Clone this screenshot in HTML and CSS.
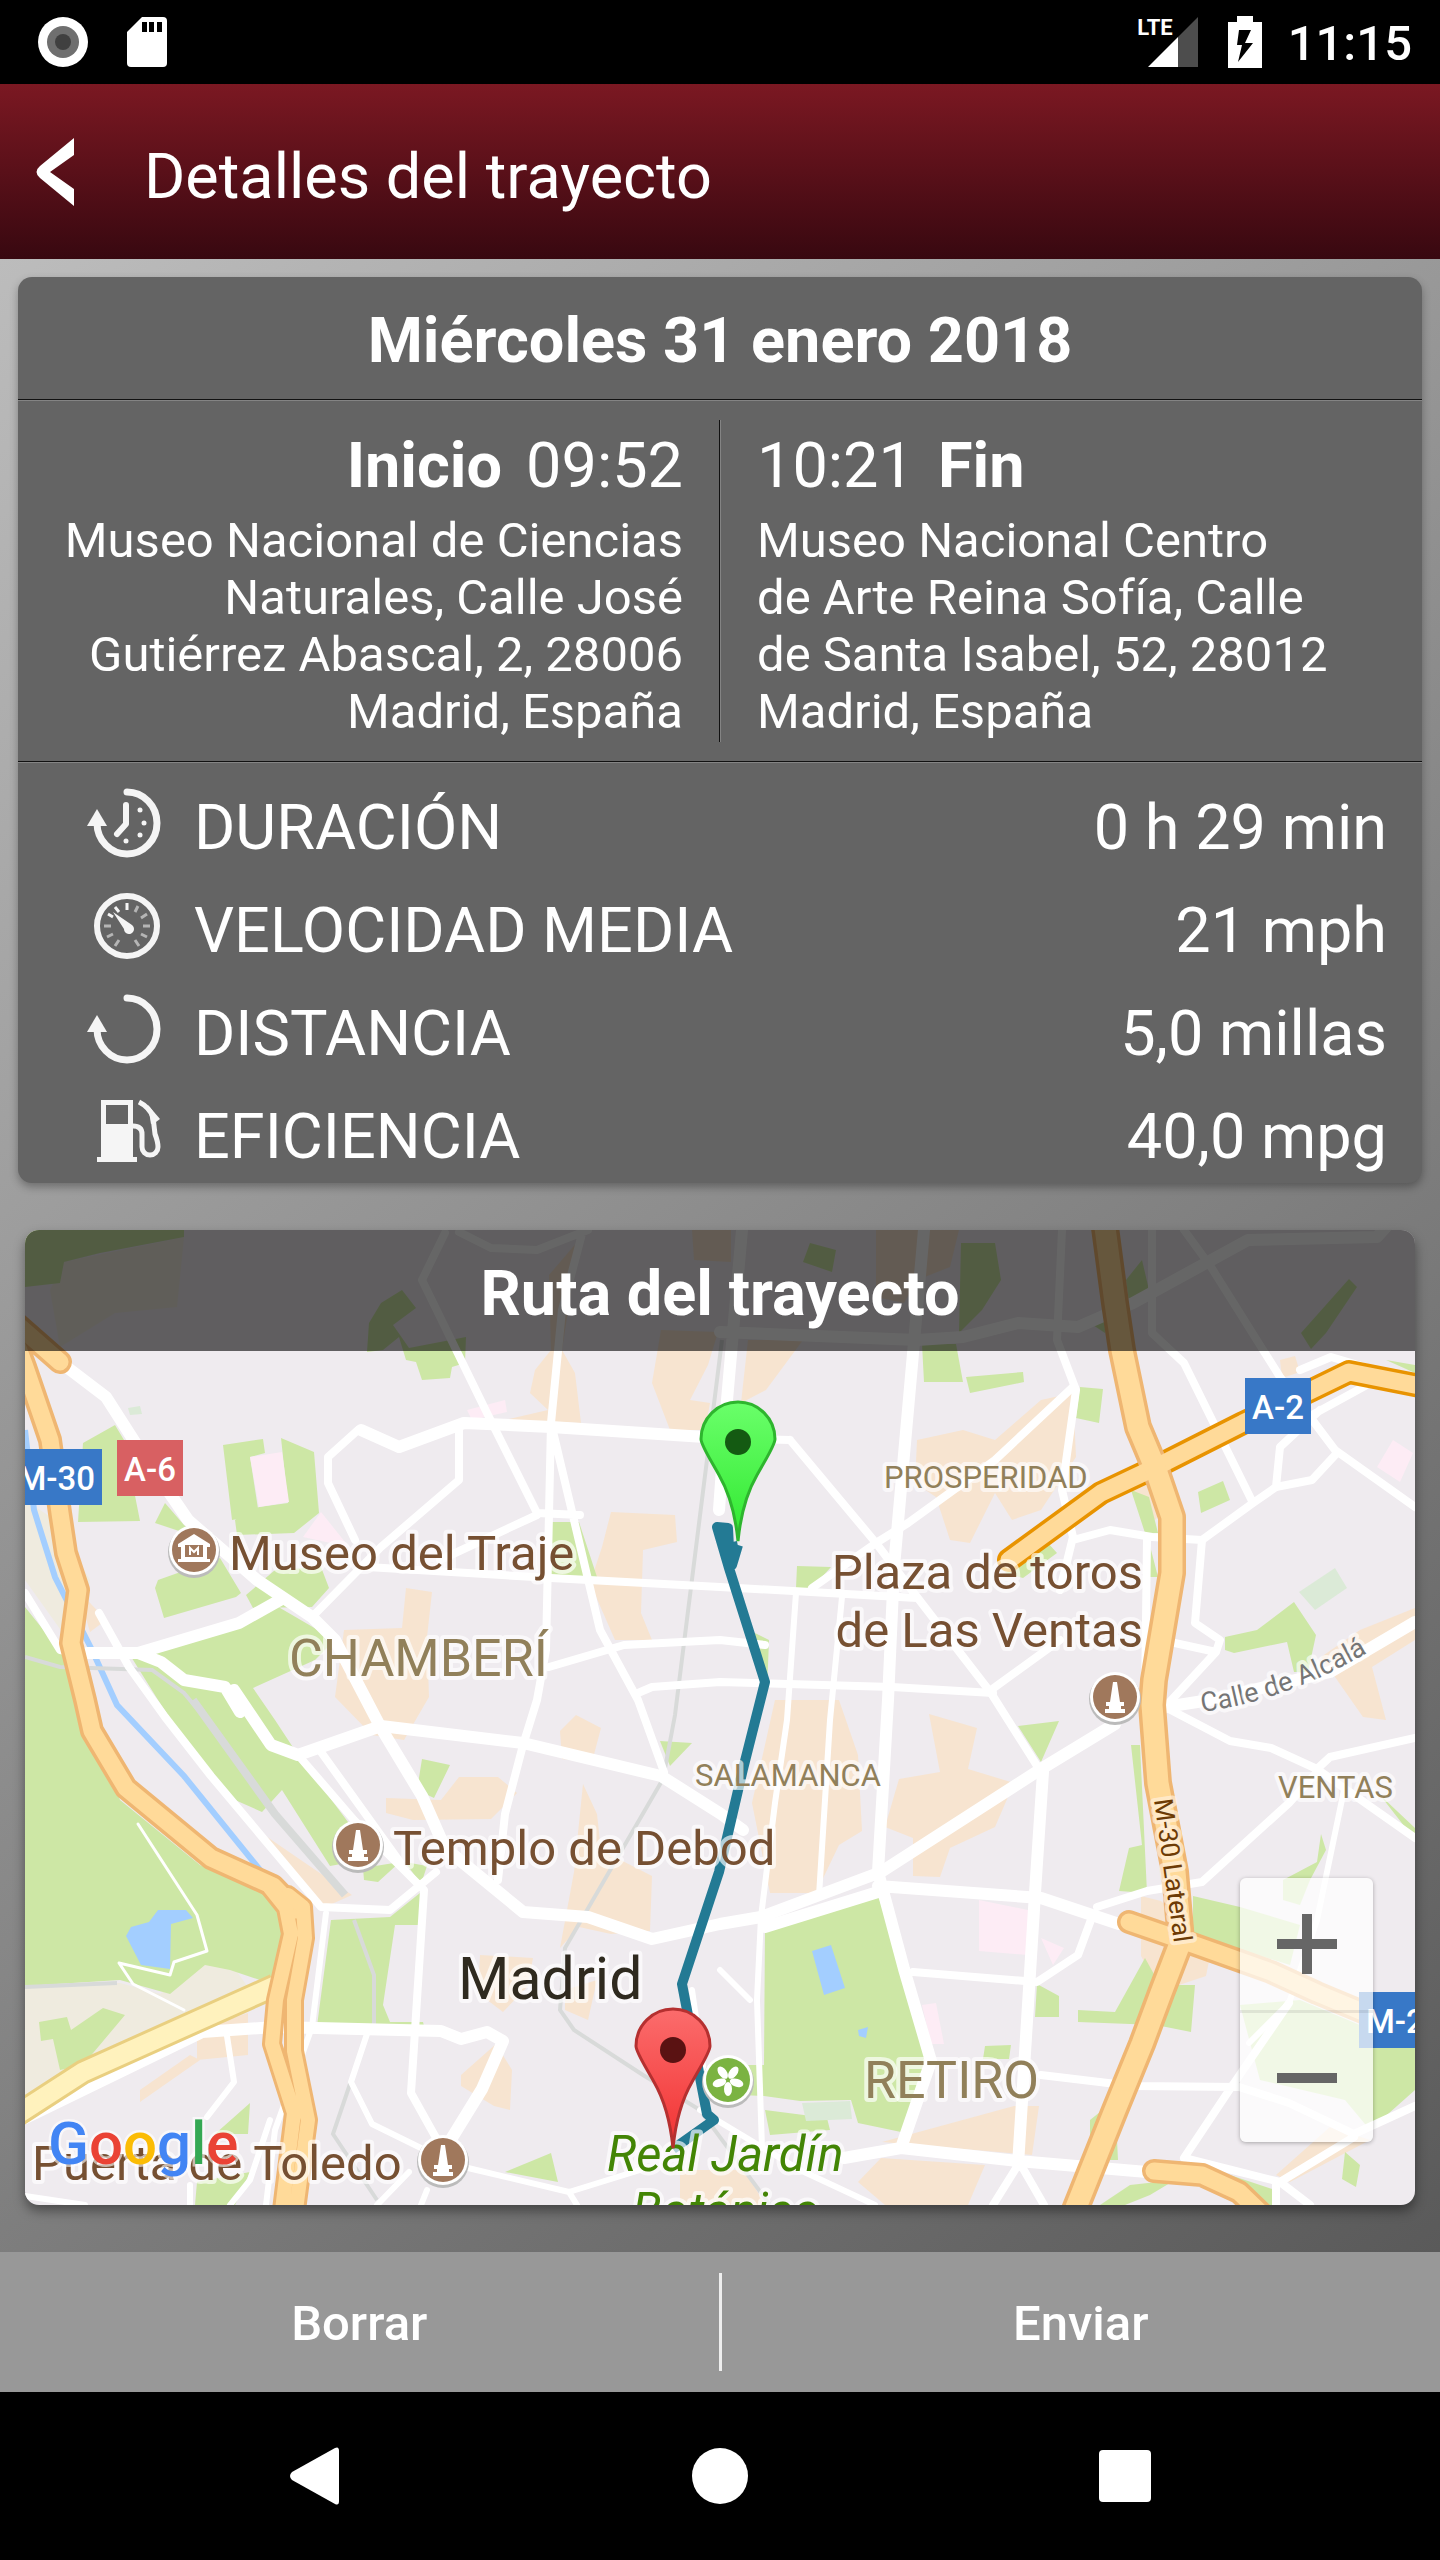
FILE: index.html
```html
<!DOCTYPE html>
<html lang="es">
<head>
    <meta charset="UTF-8">
    <meta name="viewport" content="width=device-width, initial-scale=1.0">
    <title>Detalles del trayecto</title>
    <link rel="stylesheet" href="styles.css">
</head>
<body>

<!-- Barra de estado -->
<div class="status-bar">
    <div class="status-left">
        <svg width="50" height="50" viewBox="0 0 50 50"><circle cx="25" cy="25" r="25" fill="#fff"/><circle cx="25" cy="25" r="16" fill="#6f6f6f"/><circle cx="25" cy="25" r="8" fill="#404040"/></svg>
        <svg width="40" height="50" viewBox="0 0 40 50"><path fill="#fff" d="M15 0h21a4 4 0 0 1 4 4v42a4 4 0 0 1-4 4H4a4 4 0 0 1-4-4V15z"/><path d="M15 5h5v10h-5zM22 5h5v10h-5zM30 5h5v10h-5z"/></svg>
    </div>
    <div class="status-right">
        <span class="lte">LTE</span>
        <svg class="signal" width="50" height="50" viewBox="0 0 50 50"><path fill="#4d4d4d" d="M50 0v50H30V20z"/><path fill="#fff" d="M30 20v30H0z"/></svg>
        <svg class="battery" width="34" height="52" viewBox="0 0 34 52"><path fill="#fff" d="M9 0h16v6h9v46H0V6h9z"/><path d="M11 14h12l-6 13h8L10 46l4-17H9z"/></svg>
        <span class="clock">11:15</span>
    </div>
</div>

<header class="app-header">
    <button class="back" aria-label="Volver">
        <svg width="40" height="70" viewBox="0 0 40 70"><path fill="#fff" d="M38 1v17L14 35l24 17v17L4 41q-7-6 0-12z"/></svg>
    </button>
    <h1>Detalles del trayecto</h1>
</header>

<main class="content">
    <section class="card">
        <h2 class="card-title">Miércoles 31 enero 2018</h2>
        <div class="places">
            <div class="place start">
                <p class="time"><strong>Inicio</strong><span>09:52</span></p>
                <p class="address">Museo Nacional de Ciencias Naturales, Calle José Gutiérrez Abascal, 2, 28006 Madrid, España</p>
            </div>
            <div class="place end">
                <p class="time"><span>10:21</span><strong>Fin</strong></p>
                <p class="address">Museo Nacional Centro de&nbsp;Arte Reina Sofía, Calle de&nbsp;Santa Isabel, 52, 28012 Madrid, España</p>
            </div>
        </div>
        <dl class="stats">
            <div class="stat">
                <dt>
                    <svg width="80" height="72" viewBox="0 0 80 72" fill="none" stroke="#f5f5f5"><path stroke-width="7" stroke-linecap="round" d="M43 5a30 31 0 1 1-30 31"/><path fill="#f5f5f5" stroke="none" d="M13 22l10 17H3z"/><path stroke-width="6" stroke-linecap="round" stroke-linejoin="round" d="M42 18v19l-9 10"/><g fill="#f5f5f5" stroke="none"><circle cx="56" cy="23" r="2.5"/><circle cx="60" cy="36" r="2.5"/><circle cx="56" cy="48" r="2.5"/><circle cx="42" cy="54" r="2.5"/></g></svg>
                    DURACIÓN
                </dt>
                <dd>0 h 29 min</dd>
            </div>
            <div class="stat">
                <dt>
                    <svg width="80" height="72" viewBox="0 0 80 72" fill="none" stroke="#f5f5f5"><circle cx="43" cy="36" r="30" stroke-width="6"/><g stroke="#b5b5b5" stroke-width="3"><path d="M20 36h7M59 36h7M23 47l6-3M57 44l6 3M31 56l4-6M51 50l4 6M57 28l6-4M51 22l3-6"/></g><path stroke-width="3" d="M43 13v7M31 17l4 5M24 24l5 3"/><path fill="#f5f5f5" stroke="none" d="M29 22l19 13a5 5 0 1 1-8 4z"/></svg>
                    VELOCIDAD MEDIA
                </dt>
                <dd>21 mph</dd>
            </div>
            <div class="stat">
                <dt>
                    <svg width="80" height="72" viewBox="0 0 80 72" fill="none" stroke="#f5f5f5"><path stroke-width="7" stroke-linecap="round" d="M43 5a30 31 0 1 1-30 31"/><path fill="#f5f5f5" stroke="none" d="M13 22l10 17H3z"/></svg>
                    DISTANCIA
                </dt>
                <dd>5,0 millas</dd>
            </div>
            <div class="stat">
                <dt>
                    <svg width="80" height="72" viewBox="0 0 80 72"><path fill="#f5f5f5" fill-rule="evenodd" d="M17 4h32v57h4v5H13v-5h4zM22 9v19h22V9z"/><path fill="none" stroke="#f5f5f5" stroke-width="5" d="M49 30q9 0 9 8v13a8 8 0 0 0 16 0q0-5-3-13l-2-17Q65 11 55 6"/><path fill="#f5f5f5" d="M64 9l12 14-4 3-5 2z"/></svg>
                    EFICIENCIA
                </dt>
                <dd>40,0 mpg</dd>
            </div>
        </dl>
    </section>

    <section class="map-card">
        <h2 class="map-title">Ruta del trayecto</h2>
        <svg class="map" viewBox="25 1230 1390 975" role="img" aria-label="Mapa de Madrid con la ruta">
            <defs>
                <linearGradient id="green-pin" x2="0" y2="1"><stop offset="0" stop-color="#6aff6a"/><stop offset="1" stop-color="#30e830"/></linearGradient>
                <linearGradient id="red-pin" x2="0" y2="1"><stop offset="0" stop-color="#fb6c6c"/><stop offset="1" stop-color="#f23232"/></linearGradient>
                <g id="monument"><circle cy="2" r="26" fill="#bbb"/><circle r="25" fill="#fff"/><circle r="22" fill="#a0785c"/><path fill="#fff" d="M-2-15h4l3 20h4v4h-3v3h4v4h-20v-4h4v-3h-3v-4h4z"/></g>
            </defs>

            <!-- Zonas edificadas -->
            <g fill="#f7e4d0">
                <path d="M692 1230h39v32l-37-2zM661 1330l57 2-10 33-18 35 20 3-5 27h-35l-18-47zM579 1240l-17 110 13 23 6 50-76-3 43-10-18-17 5-23 16-20-2-75z"/>
                <path d="M611 1512l64 3 2 27-34 8-2 63 11 27h-37l-25-57 12-36zM406 1588l26 4-5 45 2 60-25 43-32-5-37-38 9-67 58-2z"/>
                <path d="M459 1777h39l19 16-26 26-78 1-27-7v-15l55 2zM576 1715l25 13-9 34-30-3-2-28zM583 1784l14 30 4 36 51 26-2 55-39 3-32-7-19 21 14-76z"/>
                <path d="M480 1955l53 3-5 28-25 26-25-19zM565 1990l32-10-9 40-23-10zM496 2044l16 26-2 40-16-4-33-20v-11zM197 2030l51-17v42l-51 5zM248 1824l104 71-27 12z"/>
                <path d="M876 1230h83l-9 37-33 13-13 23-28-6zM748 1340h55l-37 50-25 13zM917 1440l46-10 32 10 46-40 32-7 3 64-35 53-29 10-17-27-25 50-20-3-14-43-21-14z"/>
                <path d="M1360 1630l55-22v32l-43 27 14 53-23-3-42-60zM775 1700h64l19 55 4 76-23 14-23 48h-46l-18-90zM929 1714l48 14-9 41 46 14-19 44-45 21-10 29-27-1v-38l-28-11 14-48 41-7z"/>
                <path d="M881 2158l104 7-17 40h-83l-27-23zM1014 2106h25l-7 49-150-13zM1276 2175l54-48 40 13-80 42zM680 2170h65l20 35h-85zM1130 1475l30-10 15 30-20 25-25-30zM1280 1360l15-4 5 16-18 6z"/>
                <path d="M1141 1896l20 5 50 50-5 25-45 15-20-35zM275 1955l30-8-5 40h-20zM140 2090l50-35 10 5-60 42zM78 1590l28 30-16 12z"/>
            </g>

            <!-- Parques -->
            <g fill="#efebdf">
                <path d="M184 1237l-7 70-62 6-55 34-10-57 14-28zM25 1500l30 20 35 60-15 70-50-70zM25 1986l95-3 40 11 45-29 25-3 20 28-70 40-95 40-60 40z"/>
            </g>
            <g fill="#cde7a5">
                <path d="M25 1230h159v7l-84 16-36 9-4 21-35 4zM402 1290l14 18-23 17 7 10 9 13 57-11-1 26-13 4-2 11-28 2-6-18-10-2-7-23-16 13-16 2 2-29 12-20z"/>
                <path d="M83 1443l32-18 9 15 16 81-62 1zM223 1445l40-6 2 14-15 4 9 58-27 5zM281 1438l33 14 5 61-25 20-57 2-2-15 24-13 29-4zM165 1503l19 22 13 12-42-14zM158 1580l62-22 21 35-5 4-72 21-9-30zM275 1570l46-3 8 21-17 19-59 1-7-13z"/>
                <path d="M275 1605l60 35-20 20-62 28 22 32 23 35 50 67 4 40-22 4-48-76-20 22-27-12-50-60-27-40-28-45 35-5zM549 1522h30l18 55-51-2z"/>
                <path d="M25 1607l37 46 20 47 38 100 80 65 80 35 10 45-15 40-45-15-25-5-35 29-50-14-95 6zM39 2022l28-5 4 13 32-22 22 7-42 50-23 5-7-31-12 2z"/>
                <path d="M331 1920l59-3 30-24 1 32h-26l-12 80 7 17h33l1 4H317zM422 1759l28 6-16 33-17-8zM363 1868l37-6-22 20-14-2zM405 1862l22 4-6 18zM250 2103l-2 31h-33zM197 2182l53-10-15 33h-40zM505 2172l46-19 7 29zM660 1741l32 2-22 23z"/>
                <path d="M810 1243l26 7-4 22-29-10zM961 1243h34l6 37-19 30-23 23zM1142 1260l7 30-20 12-3-22zM1349 1279l8 8-31 46-15 16-10-16zM922 1344h34l7 38h-39zM966 1377l57-5 1 10-54 11zM1080 1387l23 2-4 34-23-5zM1223 1481l7 19-29 13-3-21z"/>
                <path d="M1131 1490l18 7 9 36h-13zM1149 1542l9 35h-9zM1048 1543l9 10-34 25-18-5zM797 1566l34 1-19 21h-16zM1294 1602l22 33-8 37h-14l-7-30-53 11-9-3v-13l32-7zM1386 1360l29 5v8zM1090 1323l15-8v18z"/>
                <path d="M765 1927l113-32 53 166-30 71-43-9-7-23-51 1-36-5-24-1v-30h24zM765 2110l62 8 3 12-60 5zM1018 1726l41-5-18 41zM1131 1745h9l7 148-28-2 10-43 13-3zM1193 1896l47 11 60 18-10 40-97-30zM1145 1958l15 27h35l-4 47-35-7-78-3v-12l37 2zM1037 1984l22 12v21h-24z"/>
                <path d="M1283 1880l34-18 4-28 5 16-16 30-10 25-17-5zM1240 2005l60-5 115 48v42l-45 40-25-30-85-20zM1090 2120l25-20 3 60h-28zM1100 2205l30-20 45-5-25 15-25 10zM1200 2165l75 25 3 15h-16zM1345 2152l15 13-4 22-14-8zM1380 1795l35 33v12zM985 2046l26-1-2 14h-26zM749 1630l20 10-2 50z"/>
            </g>
            <path fill="#dbead7" d="M1335 1568l12 20-32 22-16-18zM802 2103l48-2 2 18-46 2zM128 1408l12-2 2 8-12 1z"/>
            <path fill="#fdecf5" d="M250 1457l32-5 7 50-30 5zM321 1512l28 35-46-10zM979 1900l49 10v45l-49-4zM1041 1938l23 10-11 17zM922 2005l14-2 8 41h-13zM1393 1440l20 13-13 29-23-15zM467 1410l38-10 2 12-35 8z"/>
            <g fill="#a3ceff">
                <path d="M158 1910h28l7 8-22 6-1 45-29-4-15-29 5-9 18-5zM812 1951l19-6 14 43-21 7zM858 2030l10-3-2 11-7-2z"/>
                <path fill="none" stroke="#a3ceff" stroke-width="6" d="M25 1430l9 80 21 67 37 73 25 55 67 71 89 110"/>
            </g>

            <!-- Vías de tren -->
            <g fill="none" stroke="#d8dad9" stroke-width="4">
                <path d="M722 1340l-47 375-12 64-98 169-5 62 14 20 69 45 57 35 70 95M25 1657l35 10 92 3 32 23 25 30M354 1920l20 55v50M367 2034l-34 100 44 66"/>
                <path stroke-width="8" d="M193 1700l82 114 70 81"/>
                <path d="M25 1987l92-4"/>
            </g>

            <!-- Calles -->
            <g class="streets">
                <path class="wide" d="M64 1365l42 32 32 50 50 73 69 60 55 37 23 23 46 88 41 68 23 52 78 64 65 5 64 22 68-15 41-7 120-45 160-103 74-45"/>
                <path class="wide" d="M361 1430l38 17 65-24 87 4 169 11M234 1690l37 55 27 10 83-29 142 17 138 33 60 38 22 16"/>
                <path class="wide" d="M878 1886l163 12 78 26M1043 1772l-8 121-17 272M844 2158l57-10 117 13 129 11M1165 1707l45-7 120-28 85-50M765 1927l113-35M924 1230l-30 337-6 133-10 172 26 97 27 92-30 87"/>
                <path class="wide" d="M25 2118l177-86 73-5 166 4 20 8 26-7 16 9-21 48-32 52M87 1653h51l101-30 41-23M138 1653l23 9 23 18 41 7 15 25M742 1230l-15 170-8 110M720 1332l197 8 46-3 55-14 60 4 55-24 115-63 129-3 18-20"/>
                <path d="M445 1233l-23 47 65 133 50 100 43 2M588 1230l-51 20-46-2-32-16M583 1230l-21 80-11 113-5 227-9 50-14 45-18 69-7 66M551 1423l49 207 38 70 26 72"/>
                <path d="M355 1540l-27-57v-26l30-27M459 1427v53l-78 67-69 70M367 1567l184 11 169 9 197 11M440 1560l97-45M790 1440l86 103 41 54 74 96 50 79M720 1438l70 2"/>
                <path d="M99 1613l30 54 36 50 46 59 110 131 69 3 46-38M25 1593l35 57 27 5M298 1755l56 65 70 70-13 203 29 52M321 1752l79 110M549 1667l75-22 96-5 45 5M638 1693l14-6 68-5 172 5 101 6"/>
                <path d="M1062 1230l-5 110 19 50-14 100 11 47-13 53M1184 1230l27 37 69 110 55 73 80 57M1152 1230v103l32 30 69 140-51 37-50-3-42-7-37 10M1253 1503l23-16 36-7 25-27M1276 1487l4-40 40-37M1300 1370l31-13 34 10M1365 1386l-53 29"/>
                <path d="M1202 1540l-7 83 25 17-4 12-55-12M1216 1652l-51 55M1147 1540l-2 160M1073 1387l-78 73-87 63-32 20-64 45M991 1690l69-50M1165 1707l65 34 41 7 46 21 98 69M1317 1769l13-12 85-19M1317 1772l-28 31-87 79-55 9-50 16"/>
                <path d="M913 1972l124 10 41-27 14-38M1041 2075l92 11 106 1 50 16 65 31 61-28M1289 2003l-59 86-46 69 96 24 74-45M1280 2182l30 23M1018 2165l-25 40M1021 2165l23 40M1276 2182v23"/>
                <path class="thin" d="M796 1593l-9 127-12 83-14 114-4 83 5 148M842 1597l-12 123-11 176M1344 1790l-27 130-28 83-40 40M326 1913l-14 114-37 103-9 75M367 2034l-16 48 21 42 55 27M227 2036l7 46-27 35M692 1990l13 90M700 2110l100 60 75 35"/>
                <path class="thin" d="M468 2168l101 24 71-22M409 2172l-32 33M427 2190l-6 15M569 2192l8 13M190 2185v20M230 2205l20-25 20-60M25 2196l60 9M720 1970l30 30"/>
                <path class="path" d="M138 1824l59 91 10 36-33 11-4 13-51-12 14 21 51 26"/>
            </g>

            <!-- Autopistas -->
            <path class="yellow-edge" d="M15 2116l68-44 192-86"/>
            <path class="yellow-fill" d="M15 2116l68-44 192-86"/>
            <g class="highway edge">
                <path class="orange" d="M1009 1560l92-67 55-26 87-44 69-33 37-18 76 15"/>
                <path d="M10 1318l50 44M15 1340l10 27 25 73 10 73 6 40 12 37-7 53 14 57 7 31 34 57 85 70 62 28 23 24"/>
                <path class="lane" d="M288 1895l15 12 2 31-11 62v51l14 69-12 90M270 1888l16 20 5 26-15 66-4 44 22 69-12 97"/>
                <path d="M1129 1922l55 19 87 31 46 21 60 25M1154 2171l48 4 37 17 24 23"/>
                <path class="main" d="M1104 1220l11 83 7 47 16 77 18 43 16 47v56l-18 107-2 25 6 78 17 89 6 69-20 52-19 51-27 66-42 105"/>
            </g>
            <g class="highway fill">
                <path d="M1009 1560l92-67 55-26 87-44 69-33 37-18 76 15"/>
                <path d="M10 1318l50 44M15 1340l10 27 25 73 10 73 6 40 12 37-7 53 14 57 7 31 34 57 85 70 62 28 23 24"/>
                <path class="lane" d="M288 1895l15 12 2 31-11 62v51l14 69-12 90M270 1888l16 20 5 26-15 66-4 44 22 69-12 97"/>
                <path d="M1129 1922l55 19 87 31 46 21 60 25M1154 2171l48 4 37 17 24 23"/>
                <path class="main" d="M1104 1220l11 83 7 47 16 77 18 43 16 47v56l-18 107-2 25 6 78 17 89 6 69-20 52-19 51-27 66-42 105"/>
            </g>

            <!-- Ruta -->
            <path class="route" d="M738 1546l-9 2-1-20-11-1 12 41 36 114-22 87-24 103-37 112 25 130 7 6-41 29M738 1545l-6 20-4-16"/>

            <!-- Carreteras -->
            <g class="shields">
                <path fill="#3878c7" d="M25 1449h77v56H25zM1245 1378h66v56h-66zM1359 1992h56v56h-56z"/>
                <path fill="#d86062" d="M117 1440h66v56h-66z"/>
                <text x="95" y="1490" text-anchor="end">M-30</text>
                <text x="150" y="1481" text-anchor="middle">A-6</text>
                <text x="1278" y="1419" text-anchor="middle">A-2</text>
                <text x="1366" y="2033">M-23</text>
            </g>

            <!-- Lugares -->
            <use href="#monument" x="1115" y="1697"/>
            <use href="#monument" x="358" y="1845"/>
            <use href="#monument" x="443" y="2160"/>
            <g transform="translate(194 1550)">
                <circle cy="2" r="26" fill="#bbb"/><circle r="25" fill="#fff"/><circle r="22" fill="#a0785c"/>
                <path fill="#fff" d="M0-16l16 10v3H-16v-3zM-13-4h26v13h-26zM-16 9h32v3h-32z"/><path fill="#a0785c" d="M-9-5H9V7H-9z"/><path fill="none" stroke="#fff" stroke-width="2" d="M-4 5v-7l4 4 4-4v7"/>
            </g>
            <g transform="translate(728 2080)">
                <circle cy="2" r="26" fill="#bbb"/><circle r="25" fill="#fff"/><circle r="22" fill="#7bb342"/>
                <g fill="#fff"><ellipse id="petal" cy="9" rx="4" ry="7"/><use href="#petal" transform="rotate(72)"/><use href="#petal" transform="rotate(144)"/><use href="#petal" transform="rotate(216)"/><use href="#petal" transform="rotate(288)"/></g>
            </g>
            <g class="labels">
                <text class="poi" x="229" y="1570">Museo del Traje</text>
                <text class="poi" x="1143" y="1589" text-anchor="end">Plaza de toros</text>
                <text class="poi" x="1143" y="1647" text-anchor="end">de Las Ventas</text>
                <text class="poi" x="393" y="1865">Templo de Debod</text>
                <text class="poi" x="32" y="2180">Puerta de Toledo</text>
                <text class="district" x="289" y="1676">CHAMBERÍ</text>
                <text class="district" x="864" y="2098">RETIRO</text>
                <text class="quarter" x="884" y="1488">PROSPERIDAD</text>
                <text class="quarter" x="695" y="1786">SALAMANCA</text>
                <text class="quarter" x="1278" y="1798">VENTAS</text>
                <text class="city" x="458" y="1999">Madrid</text>
                <text class="garden" x="607" y="2171">Real Jardín</text>
                <text class="garden" x="632" y="2228">Botánico</text>
                <path id="alcala" fill="none" d="M1202 1712q90-12 180-68"/>
                <text class="street"><textPath href="#alcala">Calle de Alcalá</textPath></text>
                <text class="road" transform="translate(1154 1800) rotate(82)">M-30 Lateral</text>
            </g>

            <!-- Marcadores -->
            <g stroke-width="3">
                <path fill="url(#green-pin)" stroke="#2eb52e" d="M738 1541q-4-40-19-66c-10-18-18-30-18-36a37 37 0 0 1 74 0c0 6-8 18-18 36q-15 26-19 66z"/>
                <circle cx="738" cy="1442" r="13" fill="#145a12"/>
                <path fill="url(#red-pin)" stroke="#b53030" d="M673 2148q-4-40-19-66c-10-18-18-30-18-36a37 37 0 0 1 74 0c0 6-8 18-18 36q-15 26-19 66z"/>
                <circle cx="673" cy="2050" r="13" fill="#5a1212"/>
            </g>

            <text class="google" x="48" y="2164"><tspan fill="#4285f4">G</tspan><tspan fill="#ea4335">o</tspan><tspan fill="#fbbc05">o</tspan><tspan fill="#4285f4">g</tspan><tspan fill="#34a853">l</tspan><tspan fill="#ea4335">e</tspan></text>
        </svg>
        <div class="zoom">
            <button aria-label="Acercar"><svg width="60" height="60" viewBox="0 0 60 60"><path fill="#666" d="M25 0h10v25h25v10H35v25H25V35H0V25h25z"/></svg></button>
            <button aria-label="Alejar"><svg width="60" height="60" viewBox="0 0 60 60"><path fill="#666" d="M0 25h60v10H0z"/></svg></button>
        </div>
    </section>
</main>

<div class="actions">
    <button>Borrar</button>
    <button>Enviar</button>
</div>

<nav class="nav-bar">
    <button aria-label="Atrás"><svg width="60" height="60" viewBox="0 0 60 60"><path fill="#fff" d="M50 2q4-2 4 3v50q0 5-4 3L7 34q-4-4 0-8z"/></svg></button>
    <button aria-label="Inicio"><svg width="60" height="60" viewBox="0 0 60 60"><circle cx="30" cy="30" r="28" fill="#fff"/></svg></button>
    <button aria-label="Recientes"><svg width="60" height="60" viewBox="0 0 60 60"><rect x="4" y="4" width="52" height="52" rx="4" fill="#fff"/></svg></button>
</nav>

</body>
</html>
```

FILE: styles.css
```css
* {
    box-sizing: border-box;
}
body {
    font-family: Roboto, "Liberation Sans", sans-serif;
    font-size: 49px;
    line-height: 57px;
    margin: 0;
    color: #fff;
    background: #000;
    min-height: 100vh;
    display: flex;
    flex-direction: column;
}
h1, h2, p, dl, dd {
    margin: 0;
}
h1, h2 {
    font-size: 63px;
    line-height: 74px;
}
svg {
    display: block;
}
button {
    font: inherit;
    color: inherit;
    background: none;
    border: none;
    padding: 0;
    cursor: pointer;
}

/* Barra de estado */
.status-bar {
    height: 84px;
    padding: 0 28px 0 38px;
    display: flex;
    align-items: center;
    justify-content: space-between;
}
.status-left, .status-right {
    display: flex;
    align-items: center;
}
.status-left {
    gap: 39px;
}
.lte {
    align-self: flex-start;
    font-size: 22px;
    line-height: 30px;
    font-weight: bold;
    margin-right: -25px;
}
.battery {
    margin: 0 26px 0 30px;
}
.clock {
    font-weight: 500;
    padding-top: 2px;
}

/* Cabecera */
.app-header {
    height: 175px;
    padding-left: 36px;
    display: flex;
    align-items: center;
    gap: 68px;
    background: linear-gradient(#7b1822, #380810);
}
.app-header h1 {
    font-weight: normal;
    padding-top: 10px;
}

/* Contenido */
.content {
    flex: 1;
    padding: 18px 18px 47px;
    background: linear-gradient(142deg, #bcbcbc, #5a5a5a);
}
.card {
    background: #646464;
    border-radius: 14px;
    box-shadow: 0 4px 8px rgba(0, 0, 0, 0.3);
}
.card-title {
    padding: 27px 0 21px;
    text-align: center;
    border-bottom: 1px solid #111;
    box-shadow: 0 1px #848484;
}
.places {
    padding: 20px 0 19px;
    display: grid;
    grid-template-columns: 1fr 1fr;
    border-bottom: 1px solid #111;
    box-shadow: 0 1px #848484;
}
.place {
    padding: 9px 36px 2px;
}
.start {
    text-align: right;
    border-right: 1px solid #111;
}
.end {
    border-left: 1px solid #848484;
}
.time {
    font-size: 63px;
    line-height: 74px;
    margin-bottom: 9px;
    display: flex;
    gap: 24px;
}
.start .time {
    justify-content: flex-end;
}
.stats {
    padding: 18px 35px 0 66px;
    font-size: 63px;
    display: flex;
    flex-direction: column;
    gap: 9px;
}
.stat, .stat dt {
    display: flex;
    align-items: center;
}
.stat {
    height: 94px;
    justify-content: space-between;
}
.stat dt {
    gap: 30px;
}
.stat svg {
    margin-bottom: 8px;
}

/* Mapa */
.map-card {
    position: relative;
    margin: 47px 7px 0;
    border-radius: 14px;
    overflow: hidden;
    background: #efebef;
    box-shadow: 0 6px 12px rgba(0, 0, 0, 0.4);
}
.map-title {
    position: absolute;
    top: 0;
    left: 0;
    right: 0;
    padding: 27px 0 20px;
    text-align: center;
    background: rgba(0, 0, 0, 0.6);
}
.map {
    width: 100%;
    height: auto;
}
.streets {
    fill: none;
    stroke: #fff;
    stroke-width: 8;
    stroke-linejoin: round;
    stroke-linecap: round;
}
.streets .wide {
    stroke-width: 12;
}
.streets .thin {
    stroke-width: 6;
}
.streets .path {
    stroke-width: 3;
}
.yellow-edge {
    fill: none;
    stroke: #e9cf80;
    stroke-width: 25;
}
.yellow-fill {
    fill: none;
    stroke: #fff2bd;
    stroke-width: 19;
}
.highway {
    fill: none;
    stroke-linejoin: round;
    stroke-linecap: round;
}
.edge {
    stroke: #efb672;
    stroke-width: 24;
}
.edge .orange {
    stroke: #e89300;
}
.edge .lane {
    stroke-width: 20;
}
.edge .main {
    stroke-width: 28;
}
.fill {
    stroke: #ffda99;
    stroke-width: 17;
}
.fill .lane {
    stroke-width: 14;
}
.fill .main {
    stroke-width: 21;
}
.route {
    fill: none;
    stroke: #237a94;
    stroke-width: 10;
    stroke-linejoin: round;
}
.shields {
    font-size: 33px;
    font-weight: 500;
    fill: #fff;
}
.labels {
    paint-order: stroke;
    stroke: rgba(255, 255, 255, 0.65);
    stroke-width: 8;
    stroke-linejoin: round;
}
.labels path {
    stroke: none;
}
.poi {
    font-size: 49px;
    fill: #765032;
}
.district {
    font-size: 52px;
    fill: #91805a;
}
.quarter {
    font-size: 31px;
    fill: #91805a;
}
.city {
    font-size: 59px;
    fill: #2f2a1f;
}
.garden {
    font-size: 49px;
    font-style: italic;
    fill: #438505;
}
.street {
    font-size: 27px;
    fill: #757575;
}
.road {
    font-size: 26px;
    fill: #6d3b05;
    stroke: rgba(255, 240, 220, 0.7);
}
.google {
    font-size: 60px;
    font-weight: 500;
    paint-order: stroke;
    stroke: rgba(255, 255, 255, 0.6);
    stroke-width: 5;
}
.zoom {
    position: absolute;
    right: 42px;
    bottom: 63px;
    width: 133px;
    border-radius: 6px;
    background: rgba(255, 255, 255, 0.72);
    box-shadow: 0 1px 4px rgba(0, 0, 0, 0.3);
}
.zoom button {
    width: 100%;
    height: 132px;
    display: flex;
    align-items: center;
    justify-content: center;
}
.zoom button + button {
    border-top: 3px solid rgba(0, 0, 0, 0.08);
}

/* Acciones */
.actions {
    height: 140px;
    padding: 21px 0;
    display: flex;
    background: #989898;
}
.actions button {
    flex: 1;
    font-weight: 500;
    padding-top: 3px;
}
.actions button + button {
    border-left: 3px solid #eee;
}

/* Navegación */
.nav-bar {
    height: 168px;
    display: flex;
    justify-content: center;
    align-items: center;
    gap: 277px;
}
.nav-bar button {
    width: 128px;
    display: flex;
    justify-content: center;
}
```
